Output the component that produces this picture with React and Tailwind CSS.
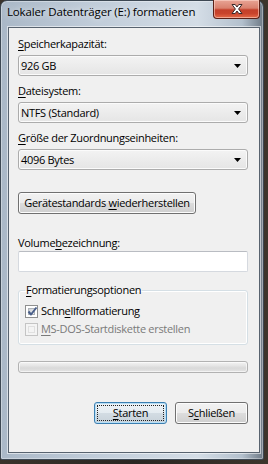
import React from "react";

const font = "font-['Open_Sans',sans-serif] text-[11px] tracking-[-0.3px]";

function U({ children }) {
  return <span className="underline underline-offset-[2px] decoration-[1px]">{children}</span>;
}

function Label({ children, className = "" }) {
  return <div className={`h-[16px] leading-[16px] text-black ${className}`}>{children}</div>;
}

function Combo({ children, className = "" }) {
  return (
    <div
      className={`h-[21px] flex items-center border border-[#acacac] rounded-[3px] bg-[linear-gradient(#f3f3f3,#e5e5e5)] shadow-[inset_0_0_0_1px_#fbfbfb] pl-[2px] pr-[6px] ${className}`}
    >
      <span className="flex-1 leading-[16px] text-black">{children}</span>
      <svg width="7" height="4" viewBox="0 0 7 4">
        <path d="M0 0H7L3.5 4Z" fill="#000" />
      </svg>
    </div>
  );
}

function Button({ children, className = "", def = false }) {
  if (def) {
    return (
      <div
        className={`h-[22px] flex border border-[#3c7fb1] rounded-[3px] bg-[linear-gradient(#eef3f7_0%,#e4ebf0_50%,#d3dce3_50%,#c8d2da_100%)] shadow-[inset_0_0_0_1px_#b6def6] p-[2px] ${className}`}
      >
        <div className="flex-1 flex items-center justify-center border border-dotted border-[#222] leading-[16px] text-black">
          {children}
        </div>
      </div>
    );
  }
  return (
    <div
      className={`h-[22px] flex items-center justify-center border border-[#707070] rounded-[3px] bg-[linear-gradient(#f2f2f2_0%,#ebebeb_50%,#dddddd_50%,#cfcfcf_100%)] shadow-[inset_0_0_0_1px_#fcfcfc] leading-[16px] text-black ${className}`}
    >
      {children}
    </div>
  );
}

function CheckBox({ checked, disabled }) {
  return (
    <div
      className={`w-[13px] h-[13px] border ${
        disabled ? "border-[#c4c4c4] bg-[#f4f4f4]" : "border-[#8e8f8f] bg-[#fff]"
      } p-[2px] flex`}
    >
      <div
        className={`flex-1 border ${
          disabled
            ? "border-[#e0e0e0] bg-[#f4f4f4]"
            : "border-[#aeb3b9] bg-[linear-gradient(135deg,#cbcfd5,#f6f6f6)]"
        } relative`}
      >
        {checked && (
          <svg className="absolute -left-[2px] -top-[3px]" width="11" height="11" viewBox="0 0 11 11">
            <path d="M1.5 5.5L4 8.5L9.5 1.5" fill="none" stroke="#4a5f8a" strokeWidth="2" strokeLinejoin="round" />
          </svg>
        )}
      </div>
    </div>
  );
}

function CloseButton() {
  return (
    <div className="-mt-[1px] w-[47px] h-[19px] rounded-b-[4px] border border-t-0 border-[#5a2118] bg-[linear-gradient(#e8a495_0%,#d9816e_45%,#c4402a_55%,#c9442c_75%,#e56a48_100%)] shadow-[inset_0_0_0_1px_rgba(255,220,210,0.55)] flex items-center justify-center">
      <svg width="14" height="12" viewBox="0 0 14 12">
        <path
          d="M2 1.5H5.2L7 4L8.8 1.5H12L8.6 6L12 10.5H8.8L7 8L5.2 10.5H2L5.4 6Z"
          fill="#fff"
          stroke="#3b2a2a"
          strokeWidth="1"
          strokeLinejoin="round"
        />
      </svg>
    </div>
  );
}

export default function App() {
  return (
    <div className={`w-[268px] h-[464px] bg-[linear-gradient(90deg,#3a332b,#2a2622,#3d352c)] overflow-hidden ${font}`}>
      <div className="w-[264px] h-[460px] flex flex-col border border-[#3d4853] rounded-t-[7px] rounded-b-[2px] bg-[linear-gradient(90deg,#aab8c7_0%,#c0ccd9_35%,#d4dde6_75%,#b3c0cd_92%,#6f7b87_100%)] px-[7px] pr-[3px] pb-[6px] shadow-[inset_0_0_0_1px_rgba(255,255,255,0.35)]">
        <div className="h-[26px] flex items-start justify-between">
          <div className="-ml-[1px] mt-[3px] h-[16px] leading-[16px] text-[11.5px] tracking-[-0.15px] text-black [text-shadow:0_0_6px_rgba(255,255,255,0.9)]">
            Lokaler Datenträger (E:) formatieren
          </div>
          <CloseButton />
        </div>
        <div className="flex-1 flex flex-col bg-[#f0f0f0] border border-[#58636f] shadow-[0_0_0_1px_rgba(255,255,255,0.55)] pl-[9px] pr-[11px] pt-[8px]">
          <Label>
            <U>S</U>peicherkapazität:
          </Label>
          <Combo className="mt-[3px]">926 GB</Combo>
          <Label className="mt-[7px]">
            <U>D</U>ateisystem:
          </Label>
          <Combo className="mt-[3px]">NTFS (Standard)</Combo>
          <Label className="mt-[7px]">
            <U>G</U>röße der Zuordnungseinheiten:
          </Label>
          <Combo className="mt-[3px]">4096 Bytes</Combo>
          <Button className="mt-[22px] w-[178px]">
            <span>
              Gerätestandards <U>w</U>iederherstellen
            </span>
          </Button>
          <Label className="mt-[21px]">
            Volume<U>b</U>ezeichnung:
          </Label>
          <div className="h-[21px] bg-white border border-[#d5d9df] border-t-[#b9bcc2] rounded-[2px]" />
          <fieldset className="mt-[10px] border border-[#d5dfe5] rounded-[3px] shadow-[inset_0_0_0_1px_#fff] pl-[6px] pb-[7px]">
            <legend className="px-[1px] h-[16px] leading-[16px] text-black">
              <U>F</U>ormatierungsoptionen
            </legend>
            <div className="mt-[5px] h-[16px] flex items-center gap-[3px]">
              <CheckBox checked />
              <span className="leading-[16px] text-black">
                Schn<U>e</U>llformatierung
              </span>
            </div>
            <div className="mt-[2px] h-[16px] flex items-center gap-[3px]">
              <CheckBox disabled />
              <span className="leading-[16px] text-[#7a7a7a]">
                <U>M</U>S-DOS-Startdiskette erstellen
              </span>
            </div>
          </fieldset>
          <div className="mt-[16px] h-[12px] border border-[#b2b2b2] rounded-[3px] bg-[linear-gradient(#f3f3f3_0%,#e6e6e6_35%,#d9d9d9_60%,#e3e3e3_100%)] shadow-[inset_0_0_0_1px_rgba(255,255,255,0.6)]" />
          <div className="mt-[29px] flex justify-end gap-[8px]">
            <Button def className="w-[73px]">
              <span>
                <U>S</U>tarten
              </span>
            </Button>
            <Button className="w-[73px]">
              <span>
                S<U>c</U>hließen
              </span>
            </Button>
          </div>
        </div>
      </div>
    </div>
  );
}
